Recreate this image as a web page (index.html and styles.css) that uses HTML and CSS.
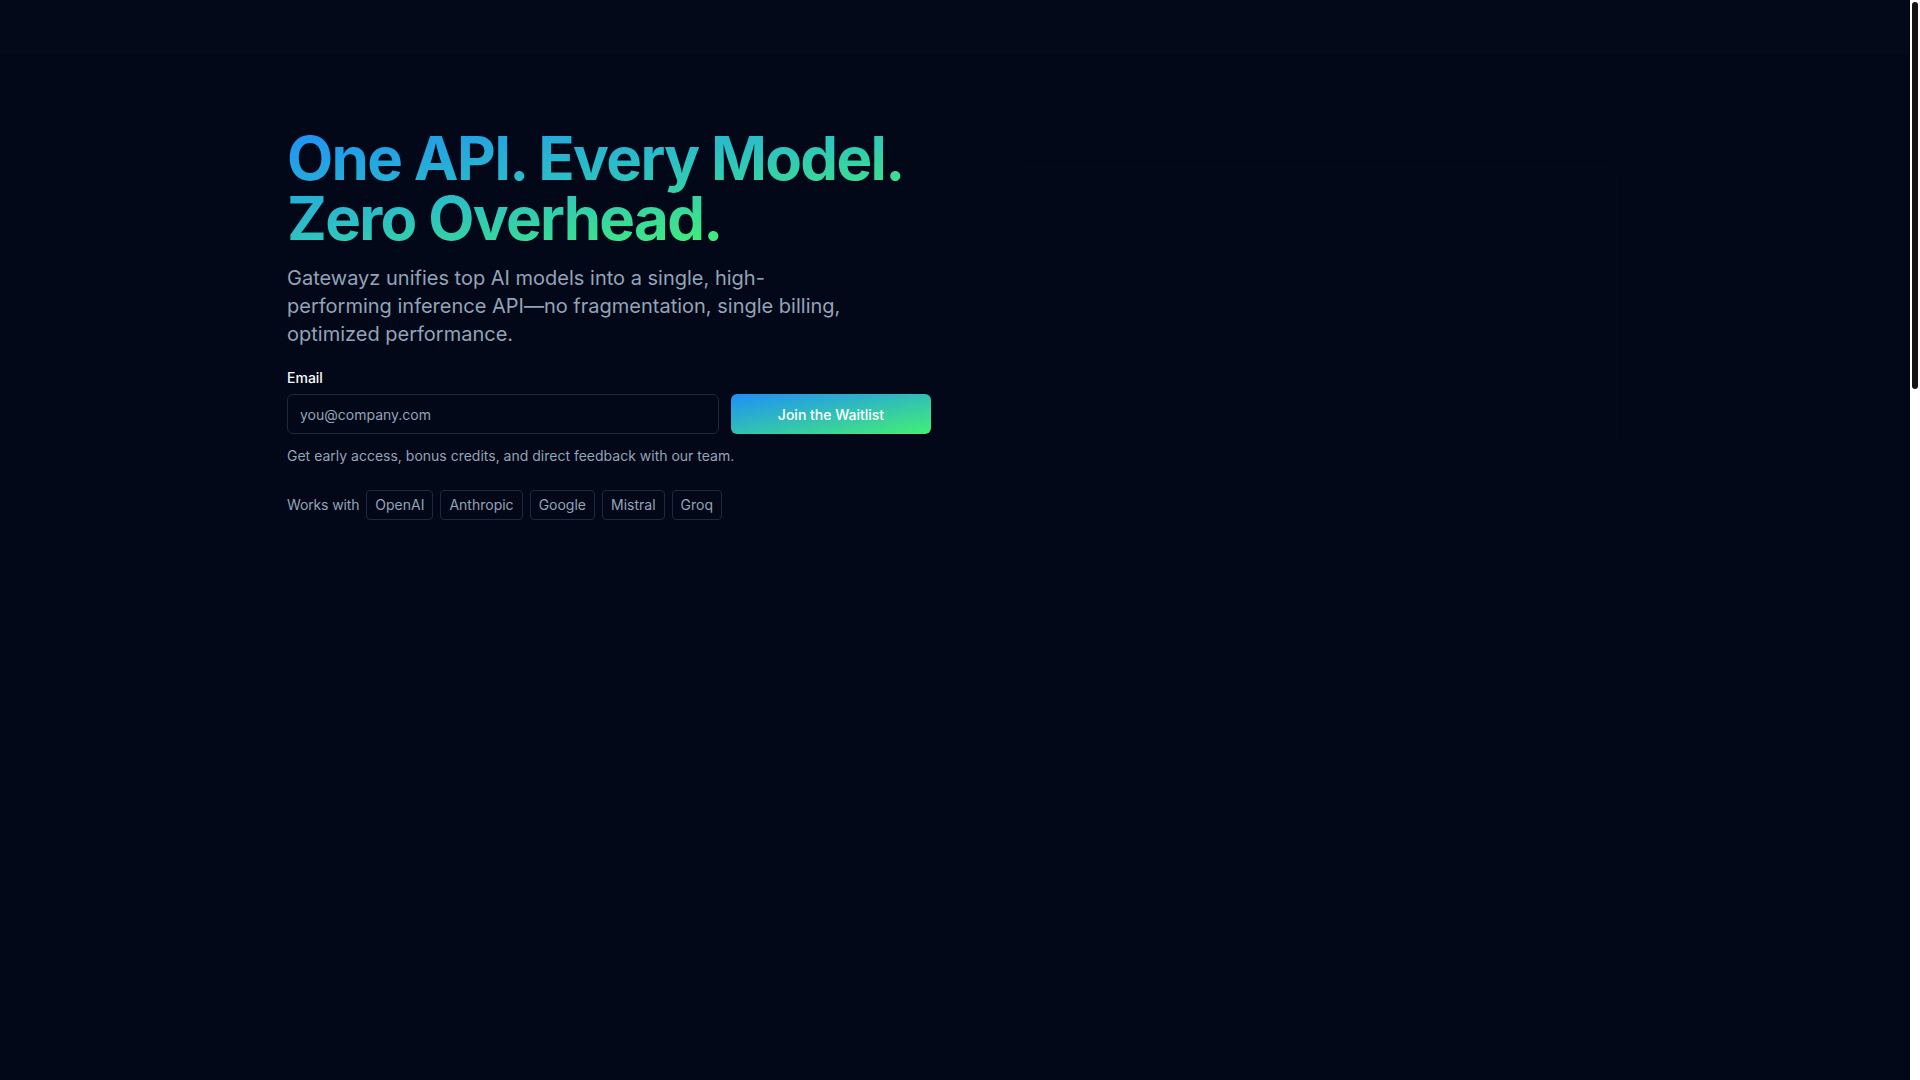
FILE: index.html
```html
<!DOCTYPE html>
<html lang="en">
<head>
<meta charset="utf-8">
<title>Gatewayz</title>
<link rel="stylesheet" href="styles.css">
</head>
<body>
<div class="scrollbar" aria-hidden="true"><div class="scrollbar-thumb"></div></div>
<header class="topbar"></header>
<main class="page">
  <section class="hero">
    <div class="hero-copy">
      <h1 class="headline">One API. Every Model.<br>Zero Overhead.</h1>
      <p class="lead">Gatewayz unifies top AI models into a single, high-performing inference API—no fragmentation, single billing, optimized performance.</p>
      <form class="signup" onsubmit="return false">
        <label class="label" for="email">Email</label>
        <div class="row">
          <input id="email" class="input" type="email" placeholder="you@company.com">
          <button class="cta" type="submit">Join the Waitlist</button>
        </div>
        <p class="hint">Get early access, bonus credits, and direct feedback with our team.</p>
      </form>
      <div class="works">
        <span class="works-label">Works with</span>
        <span class="chip">OpenAI</span>
        <span class="chip">Anthropic</span>
        <span class="chip">Google</span>
        <span class="chip">Mistral</span>
        <span class="chip">Groq</span>
      </div>
    </div>
    <div class="hero-visual">
      <div class="ghost-card"></div>
    </div>
  </section>
  <section class="below"></section>
</main>
</body>
</html>
```

FILE: styles.css
```css
html {
  background: #020817;
}
body {
  margin: 0 10px 0 0;
  background: #020817;
  color: #f8fafc;
  font-family: Inter, "Noto Sans", sans-serif;
}
.scrollbar {
  position: fixed;
  top: 0;
  right: 0;
  width: 10px;
  height: 100vh;
  background: #ffffff;
  z-index: 10;
}
.scrollbar-thumb {
  margin: 2px 2px 0 2px;
  height: 387px;
  border-radius: 3px;
  background: #141414;
}
.topbar {
  height: 52px;
  background: #030919;
  border-bottom: 1px solid #040b1b;
}
.hero {
  width: 1336px;
  margin: 0 auto;
  padding-top: 75px;
  display: flex;
  gap: 83px;
}
.hero-copy {
  width: 644px;
  flex: none;
}
.headline {
  margin: 0;
  font-size: 60px;
  line-height: 1;
  font-weight: 700;
  letter-spacing: -0.028em;
  background: linear-gradient(to bottom right, #1e8ff8 0%, #2cc0c4 45%, #44f074 85%);
  -webkit-background-clip: text;
  background-clip: text;
  color: transparent;
  width: fit-content;
}
.lead {
  margin: 16px 0 0;
  max-width: 576px;
  font-size: 20px;
  line-height: 28px;
  color: #94a3b8;
}
.signup {
  margin-top: 20px;
}
.label {
  display: block;
  font-size: 14px;
  line-height: 20px;
  font-weight: 500;
  color: #f8fafc;
}
.row {
  margin-top: 6px;
  display: flex;
  gap: 12px;
}
.input {
  flex: 1;
  height: 40px;
  box-sizing: border-box;
  padding: 0 12px;
  border: 1px solid #1e293b;
  border-radius: 6px;
  background: #020817;
  color: #f8fafc;
  font-family: inherit;
  font-size: 14px;
  outline: none;
}
.input::placeholder {
  color: #94a3b8;
}
.cta {
  width: 200px;
  height: 40px;
  border: none;
  border-radius: 6px;
  background: linear-gradient(to bottom right, #1e8ff8, #44f074);
  color: #ffffff;
  font-family: inherit;
  font-size: 14px;
  font-weight: 500;
  cursor: pointer;
}
.hint {
  margin: 12px 0 0;
  font-size: 14px;
  line-height: 20px;
  color: #94a3b8;
}
.works {
  margin-top: 24px;
  display: flex;
  align-items: center;
  gap: 7px;
  font-size: 14px;
  line-height: 20px;
  color: #94a3b8;
}
.works-label {
  letter-spacing: -0.01em;
}
.chip {
  padding: 4px 8px;
  border: 1px solid #1e293b;
  border-radius: 4px;
}
.hero-visual {
  flex: 1;
  padding-top: 39px;
}
.ghost-card {
  width: 601px;
  height: 274px;
  border: 1px solid #030a1a;
  background: #020818;
  border-radius: 4px;
}
.below {
  height: 2450px;
}
```
